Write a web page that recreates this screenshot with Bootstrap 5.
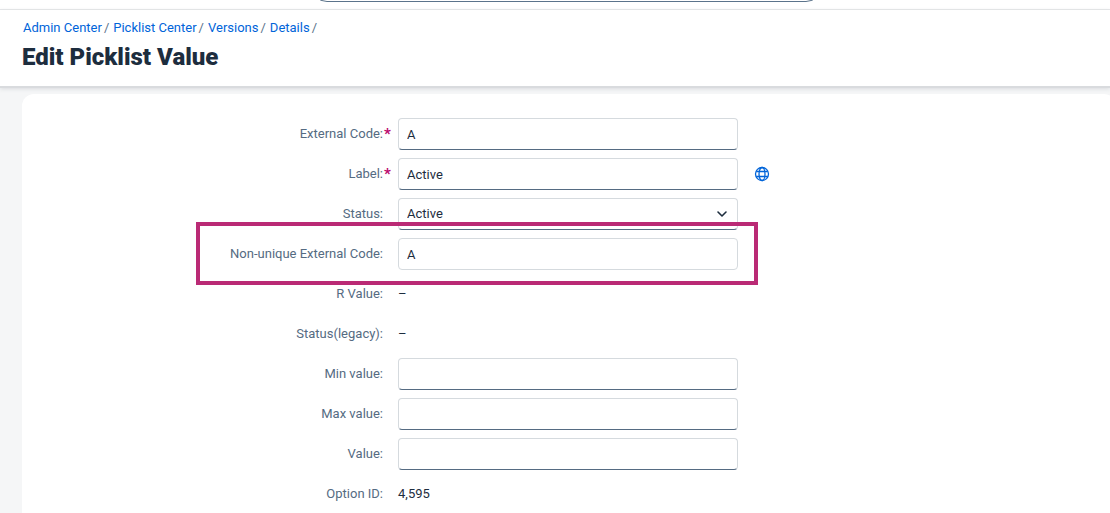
<!DOCTYPE html>
<html lang="en">
<head>
<meta charset="utf-8">
<meta name="viewport" content="width=device-width, initial-scale=1">
<title>Edit Picklist Value</title>
<link href="https://cdn.jsdelivr.net/npm/bootstrap@5.3.0/dist/css/bootstrap.min.css" rel="stylesheet">
<style>
  body { font-family: Roboto, "Liberation Sans", sans-serif; font-size: 13px; line-height: 20px; color: #1d2d3e; background: #f5f6f7; overflow: hidden; }
  .shell-bar { height: 10px; border-bottom: 1px solid #e5e6e8; padding-left: 28%; }
  .shell-search { width: 64%; height: 32px; margin-bottom: 7px; border: 1px solid #5b738b; border-radius: 16px; background: #fff; }
  .page-head { padding: 8px 22px 14px; border-bottom: 2px solid #d9dbde; box-shadow: 0 1px 4px #d9dbde; }
  .crumbs { padding-left: 1px; }
  .crumbs li { padding-right: 4px; }
  .crumbs a { color: #0064d9; text-decoration: none; }
  .crumbs li::after { content: "/"; color: #5b738b; padding-left: 2px; }
  .page-title { font-size: 24px; line-height: 30px; font-weight: 900; }
  .panel { margin: 6px -6px 0 22px; padding: 24px 0; border-radius: 12px; }
  .field-row { display: grid; grid-template-columns: 33% minmax(0, 340px) auto; column-gap: 15px; height: 32px; align-items: center; }
  .field-label { position: relative; text-align: right; color: #556b82; }
  .required-mark { position: absolute; left: 100%; padding-left: 1px; top: 0; color: #ba066c; font-size: 15px; font-weight: 700; }
  .field-box { height: 32px; padding: 0 8px; font-size: 13px; color: #1d2d3e; border: 1px solid #d5dade; border-bottom-color: #556b82; border-radius: 4px; }
  .field-box.plain { border-bottom-color: #d5dade; }
  select.field-box { appearance: none; background-image: none; }
  .chevron { position: absolute; right: 10px; top: 12px; pointer-events: none; }
  .callout-frame { position: absolute; inset: -16px -20px -15px -202px; border: 4px solid #ba2a75; pointer-events: none; z-index: 2; }
  .lang-btn { width: 17px; height: 16px; color: #0064d9; }
</style>
</head>
<body>
<header class="shell-bar bg-white d-flex align-items-end overflow-hidden">
  <input type="search" class="shell-search" aria-label="Search">
</header>
<div class="page-head bg-white position-relative">
  <nav aria-label="Breadcrumb">
    <ol class="crumbs list-unstyled d-flex mb-0">
      <li><a href="#">Admin Center</a></li>
      <li><a href="#">Picklist Center</a></li>
      <li><a href="#">Versions</a></li>
      <li><a href="#">Details</a></li>
    </ol>
  </nav>
  <h1 class="page-title mb-0 pt-1">Edit Picklist Value</h1>
</div>
<main class="panel bg-white">
  <form class="d-flex flex-column gap-2">
    <div class="field-row">
      <label class="field-label" for="code">External Code:<span class="required-mark">*</span></label>
      <input class="form-control field-box" id="code" type="text" value="A">
    </div>
    <div class="field-row">
      <label class="field-label" for="label">Label:<span class="required-mark">*</span></label>
      <input class="form-control field-box" id="label" type="text" value="Active">
      <button type="button" class="lang-btn border-0 bg-transparent p-0 d-flex justify-content-end" aria-label="Translations">
        <svg width="16" height="16" viewBox="0 0 16 16" fill="none" stroke="currentColor" stroke-width="1.3"><circle cx="8" cy="8" r="6.5"/><ellipse cx="8" cy="8" rx="3" ry="6.5"/><path d="M2.3 5.5h11.4M2.3 10.5h11.4"/></svg>
      </button>
    </div>
    <div class="field-row">
      <label class="field-label" for="status">Status:</label>
      <div class="position-relative">
        <select class="form-select field-box" id="status"><option>Active</option><option>Inactive</option></select>
        <svg class="chevron" width="12" height="8" viewBox="0 0 12 8" fill="none" stroke="#1d2d3e" stroke-width="1.6" stroke-linecap="round" stroke-linejoin="round"><path d="M2 2l4 4 4-4"/></svg>
      </div>
    </div>
    <div class="field-row">
      <label class="field-label" for="nucode">Non-unique External Code:</label>
      <div class="position-relative">
        <input class="form-control field-box plain" id="nucode" type="text" value="A">
        <div class="callout-frame"></div>
      </div>
    </div>
    <div class="field-row"><span class="field-label">R Value:</span><span>–</span></div>
    <div class="field-row"><span class="field-label">Status(legacy):</span><span>–</span></div>
    <div class="field-row">
      <label class="field-label" for="min">Min value:</label>
      <input class="form-control field-box" id="min" type="text">
    </div>
    <div class="field-row">
      <label class="field-label" for="max">Max value:</label>
      <input class="form-control field-box" id="max" type="text">
    </div>
    <div class="field-row">
      <label class="field-label" for="val">Value:</label>
      <input class="form-control field-box" id="val" type="text">
    </div>
    <div class="field-row"><span class="field-label">Option ID:</span><span>4,595</span></div>
  </form>
</main>
<script src="https://cdn.jsdelivr.net/npm/bootstrap@5.3.0/dist/js/bootstrap.bundle.min.js"></script>
</body>
</html>
